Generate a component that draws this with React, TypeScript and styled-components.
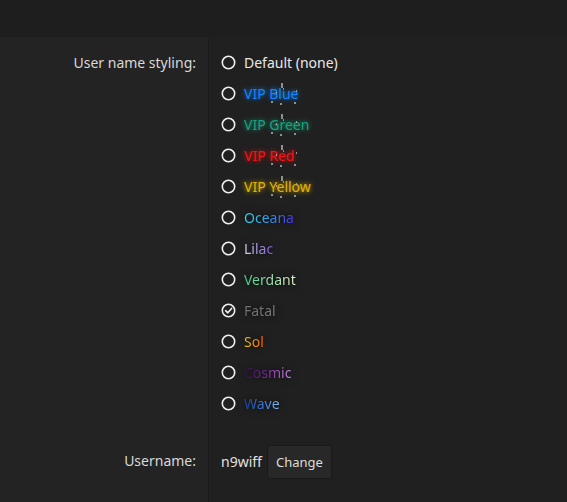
import styled, { createGlobalStyle, css } from "styled-components";

const GlobalStyle = createGlobalStyle`
  html, body {
    margin: 0;
    background: #1e1e1e;
  }
  body {
    font-family: "Noto Sans", "DejaVu Sans", sans-serif;
    font-size: 14px;
    color: #dcdcdc;
  }
`;

const Page = styled.div`
  min-height: 502px;
  display: flex;
  flex-direction: column;
`;

const TopBar = styled.div`
  height: 37px;
  background: #1e1e1e;
`;

const Form = styled.div`
  flex: 1;
  display: grid;
  grid-template-columns: 208px 1fr;
  grid-template-rows: auto 1fr;
`;

const Label = styled.div<{ $padTop: number }>`
  background: #232323;
  text-align: right;
  padding: ${(p) => p.$padTop}px 12px 0 0;
  line-height: 31px;
  color: #d8d8d8;
`;

const Cell = styled.div`
  background: #202020;
  border-left: 1px solid #1b1b1b;
  padding-left: 12px;
`;

const OptionList = styled(Cell)`
  padding-top: 10px;
  padding-bottom: 16px;
  display: flex;
  flex-direction: column;
`;

const Option = styled.label`
  height: 31px;
  display: flex;
  align-items: center;
  gap: 8px;
  cursor: pointer;
`;

const Radio = styled.span`
  width: 15px;
  height: 15px;
  display: flex;
  align-items: center;
  justify-content: center;
`;

type Look = {
  color?: string;
  gradient?: string;
  glow?: boolean;
};

const Name = styled.span<{ $look: Look }>`
  position: relative;
  line-height: 20px;
  ${(p) =>
    p.$look.gradient
      ? css`
          background: ${p.$look.gradient};
          -webkit-background-clip: text;
          background-clip: text;
          color: transparent;
          filter: drop-shadow(0 0 4px rgba(0, 0, 0, 0.9));
        `
      : css`
          color: ${p.$look.color ?? "#e8e8e8"};
          text-shadow: ${p.$look.glow ? `0 0 5px ${p.$look.color}` : "none"};
        `}
`;

const Sparkle = styled.i<{ $w: number; $h: number }>`
  position: absolute;
  width: ${(p) => p.$w}px;
  height: ${(p) => p.$h}px;
  background: #b5b5b5;
  opacity: 0.75;
`;

const UserCell = styled(Cell)`
  display: flex;
  align-items: flex-start;
  padding-top: 10px;
  gap: 5px;
`;

const UserName = styled.span`
  line-height: 34px;
  color: #e0e0e0;
`;

const ChangeButton = styled.button`
  height: 34px;
  width: 65px;
  background: #282828;
  border: 1px solid #1a1a1a;
  border-radius: 2px;
  color: #dcdcdc;
  font: inherit;
  font-size: 13px;
  cursor: pointer;
`;

const styles: { name: string; look: Look; vip?: boolean; checked?: boolean }[] = [
  { name: "Default (none)", look: { color: "#e8e8e8" } },
  { name: "VIP Blue", look: { color: "#0f86ff", glow: true }, vip: true },
  { name: "VIP Green", look: { color: "#16a37c", glow: true }, vip: true },
  { name: "VIP Red", look: { color: "#f01414", glow: true }, vip: true },
  { name: "VIP Yellow", look: { color: "#e2b400", glow: true }, vip: true },
  { name: "Oceana", look: { gradient: "linear-gradient(90deg, #34d6ea 0%, #2fa2ee 45%, #4b2fe6 100%)" } },
  { name: "Lilac", look: { gradient: "linear-gradient(90deg, #d4d4f6 0%, #a89ae6 50%, #7e57cc 100%)" } },
  { name: "Verdant", look: { gradient: "linear-gradient(90deg, #3fd08a 0%, #9fe3b3 55%, #e2efcf 100%)" } },
  { name: "Fatal", look: { gradient: "linear-gradient(90deg, #6e6e6e 0%, #7a7a7a 100%)" }, checked: true },
  { name: "Sol", look: { gradient: "linear-gradient(90deg, #e8c400 0%, #ff8a00 60%, #ff5c00 100%)" } },
  { name: "Cosmic", look: { gradient: "linear-gradient(90deg, #34084e 0%, #7a2a9a 50%, #c88ae0 100%)" } },
  { name: "Wave", look: { gradient: "linear-gradient(90deg, #123f96 0%, #3e7ee0 60%, #8cbcf2 100%)" } },
];

function RadioIcon({ checked }: { checked?: boolean }) {
  return (
    <Radio>
      <svg width="15" height="15" viewBox="0 0 15 15">
        <circle cx="7.5" cy="7.5" r="6.2" fill="none" stroke="#f0f0f0" strokeWidth="1.6" />
        {checked && (
          <path d="M4.6 7.7 L6.8 9.8 L10.6 5.4" fill="none" stroke="#f0f0f0" strokeWidth="1.6" strokeLinecap="round" strokeLinejoin="round" />
        )}
      </svg>
    </Radio>
  );
}

function Sparkles() {
  return (
    <>
      <Sparkle $w={2} $h={5} style={{ left: 37, top: -1 }} />
      <Sparkle $w={1} $h={2} style={{ left: 39, top: 4 }} />
      <Sparkle $w={2} $h={2} style={{ left: 27, top: 17 }} />
      <Sparkle $w={2} $h={2} style={{ left: 36, top: 19 }} />
      <Sparkle $w={2} $h={2} style={{ left: 50, top: 18 }} />
      <Sparkle $w={1} $h={2} style={{ left: 32, top: 8 }} />
      <Sparkle $w={1} $h={2} style={{ left: 52, top: 6 }} />
    </>
  );
}

export default function App() {
  return (
    <Page>
      <GlobalStyle />
      <TopBar />
      <Form>
        <Label $padTop={10}>User name styling:</Label>
        <OptionList>
          {styles.map((s) => (
            <Option key={s.name}>
              <RadioIcon checked={s.checked} />
              <Name $look={s.look}>
                {s.name}
                {s.vip && <Sparkles />}
              </Name>
            </Option>
          ))}
        </OptionList>
        <Label $padTop={10}>Username:</Label>
        <UserCell>
          <UserName>n9wiff</UserName>
          <ChangeButton>Change</ChangeButton>
        </UserCell>
      </Form>
    </Page>
  );
}
